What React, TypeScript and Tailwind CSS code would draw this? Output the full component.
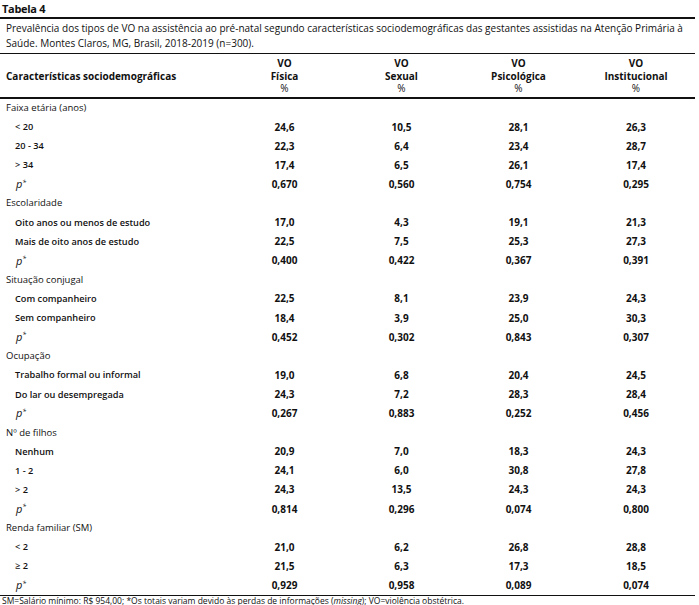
const groups: { title: string; rows: string[][]; p: string[] }[] = [
  {
    title: "Faixa etária (anos)",
    rows: [
      ["< 20", "24,6", "10,5", "28,1", "26,3"],
      ["20 - 34", "22,3", "6,4", "23,4", "28,7"],
      ["> 34", "17,4", "6,5", "26,1", "17,4"],
    ],
    p: ["0,670", "0,560", "0,754", "0,295"],
  },
  {
    title: "Escolaridade",
    rows: [
      ["Oito anos ou menos de estudo", "17,0", "4,3", "19,1", "21,3"],
      ["Mais de oito anos de estudo", "22,5", "7,5", "25,3", "27,3"],
    ],
    p: ["0,400", "0,422", "0,367", "0,391"],
  },
  {
    title: "Situação conjugal",
    rows: [
      ["Com companheiro", "22,5", "8,1", "23,9", "24,3"],
      ["Sem companheiro", "18,4", "3,9", "25,0", "30,3"],
    ],
    p: ["0,452", "0,302", "0,843", "0,307"],
  },
  {
    title: "Ocupação",
    rows: [
      ["Trabalho formal ou informal", "19,0", "6,8", "20,4", "24,5"],
      ["Do lar ou desempregada", "24,3", "7,2", "28,3", "28,4"],
    ],
    p: ["0,267", "0,883", "0,252", "0,456"],
  },
  {
    title: "Nº de filhos",
    rows: [
      ["Nenhum", "20,9", "7,0", "18,3", "24,3"],
      ["1 - 2", "24,1", "6,0", "30,8", "27,8"],
      ["> 2", "24,3", "13,5", "24,3", "24,3"],
    ],
    p: ["0,814", "0,296", "0,074", "0,800"],
  },
  {
    title: "Renda familiar (SM)",
    rows: [
      ["< 2", "21,0", "6,2", "26,8", "28,8"],
      ["≥ 2", "21,5", "6,3", "17,3", "18,5"],
    ],
    p: ["0,929", "0,958", "0,089", "0,074"],
  },
];

const cols = ["Física", "Sexual", "Psicológica", "Institucional"];
const grid = "grid grid-cols-[226px_117px_117px_117px_118px]";

function Rule() {
  return <div className="h-[1.5px] bg-[#111]" />;
}

export default function App() {
  return (
    <div className="w-[695px] bg-white text-[#111] font-['Open_Sans',sans-serif]">
      <div className="h-[17px] pl-[2px] text-[11px] font-bold leading-[17px] tracking-[-0.3px]">Tabela 4</div>
      <Rule />
      <div className="px-[6px] pt-[2px] pb-[2px] text-[10px] leading-[15px]">
        Prevalência dos tipos de VO na assistência ao pré-natal segundo características sociodemográficas das gestantes
        assistidas na Atenção Primária à Saúde. Montes Claros, MG, Brasil, 2018-2019 (n=300).
      </div>
      <Rule />
      <div className={`${grid} pt-[3px] pb-[2.5px] text-[10px] font-bold leading-[12.5px]`}>
        <div className="flex items-center pl-[6px]">Características sociodemográficas</div>
        {cols.map((c) => (
          <div key={c} className="text-center">
            <div>VO</div>
            <div>{c}</div>
            <div className="font-normal">%</div>
          </div>
        ))}
      </div>
      <Rule />
      <div className="text-[9.5px]">
        {groups.map((g) => (
          <div key={g.title}>
            <div className="flex h-[19.1px] items-center pl-[6px]">{g.title}</div>
            {g.rows.map((r) => (
              <div key={r[0]} className={`${grid} h-[19.1px] items-center`}>
                <div className="pl-[15px] text-[9.2px] font-semibold">{r[0]}</div>
                {r.slice(1).map((v, i) => (
                  <div key={i} className="text-center text-[10px] font-bold">{v}</div>
                ))}
              </div>
            ))}
            <div className={`${grid} h-[19.1px] items-center`}>
              <div className="pl-[16px] text-[11px] font-medium italic">
                p<sup className="text-[7px]">*</sup>
              </div>
              {g.p.map((v, i) => (
                <div key={i} className="text-center text-[10px] font-bold">{v}</div>
              ))}
            </div>
          </div>
        ))}
      </div>
      <Rule />
      <div className="pl-[2px] text-[8.5px] leading-[9px]">
        SM=Salário mínimo: R$ 954,00; *Os totais variam devido às perdas de informações (<i>missing</i>); VO=violência obstétrica.
      </div>
    </div>
  );
}
